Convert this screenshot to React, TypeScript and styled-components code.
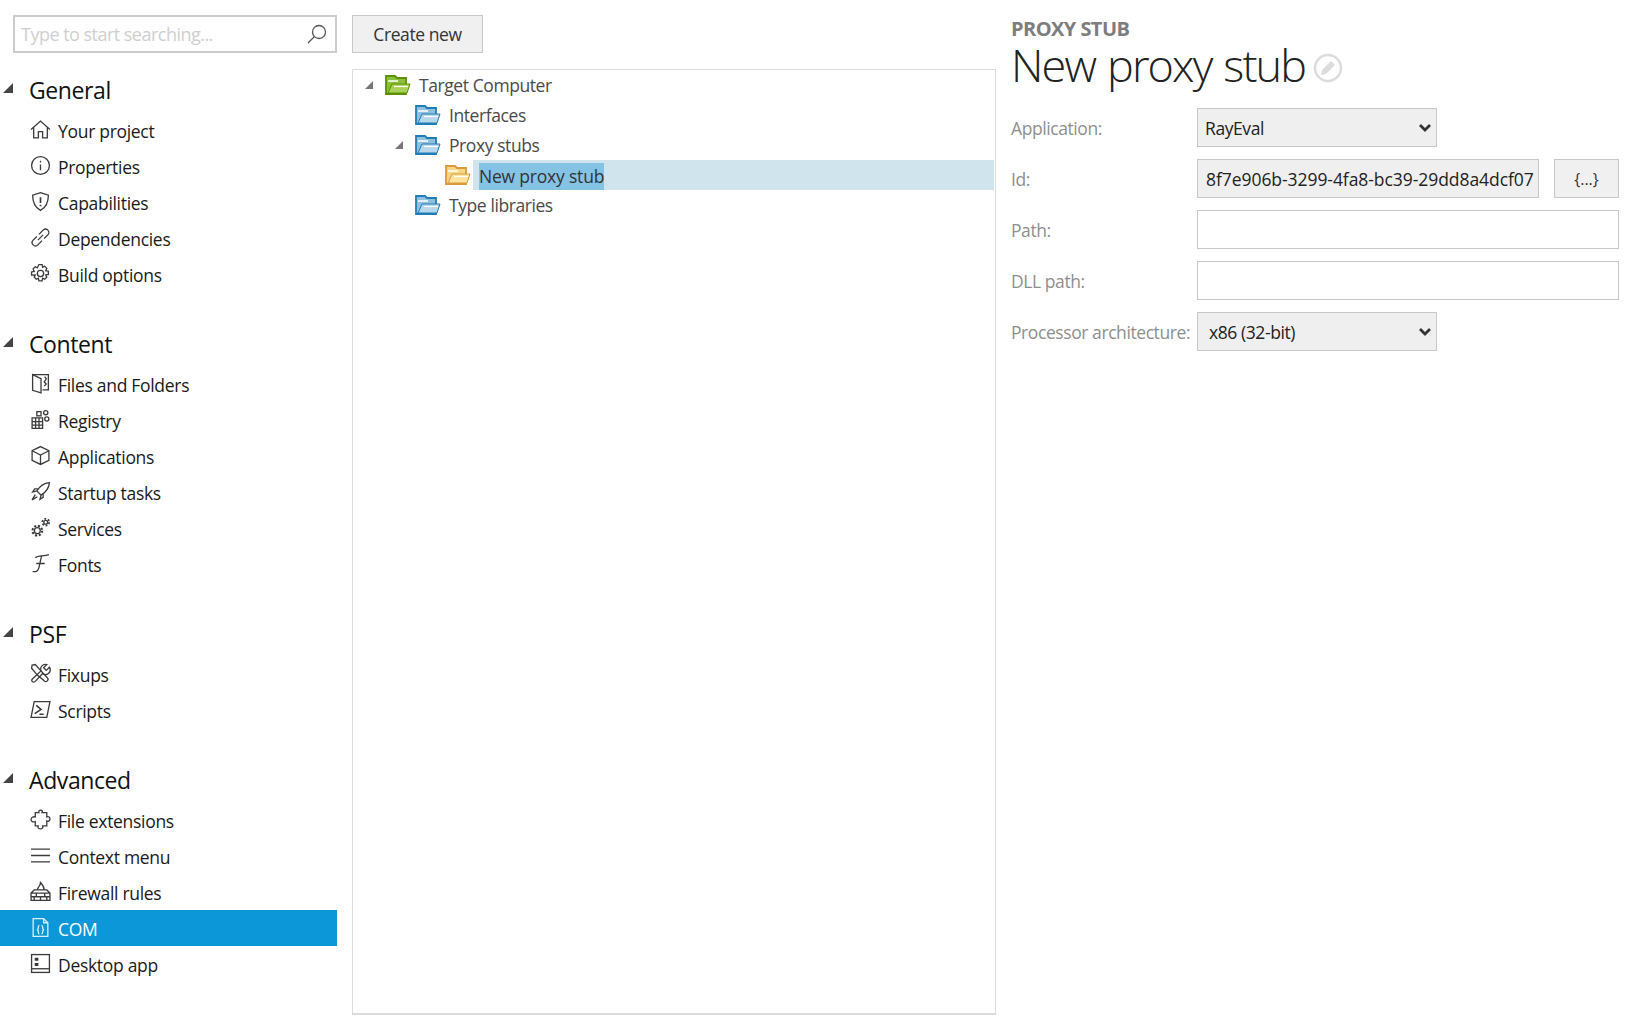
import React from "react";
import styled, { createGlobalStyle } from "styled-components";

const Global = createGlobalStyle`
  html, body { margin: 0; padding: 0; background: #fff; }
  body { font-family: "Open Sans", "Noto Sans", sans-serif; color: #1a1a1a; }
`;

const Page = styled.div`
  width: 1632px;
  height: 1029px;
  display: grid;
  grid-template-columns: 337px 644px 1fr;
  column-gap: 15px;
  padding: 15px 13px 14px 0;
  box-sizing: border-box;
  overflow: hidden;
`;

const Sidebar = styled.aside`
  display: flex;
  flex-direction: column;
`;

const SearchBox = styled.div`
  margin-left: 13px;
  height: 38px;
  box-sizing: border-box;
  border: 2px solid #cccccc;
  display: flex;
  align-items: center;
  padding: 0 8px 0 6px;
  margin-bottom: 17px;
`;

const SearchText = styled.span`
  flex: 1;
  font-size: 18px;
  letter-spacing: -0.52px;
  color: #cfcfcf;
`;

const SectionHead = styled.div<{ $top: number }>`
  display: flex;
  align-items: center;
  height: 40px;
  margin-top: ${(p) => p.$top}px;
  margin-bottom: 2px;
  font-size: 23px;
  letter-spacing: -0.4px;
  color: #111;
`;

const Arrow = styled.svg`
  width: 10px;
  height: 10px;
  margin: -4px 0 0 3px;
`;

const HeadLabel = styled.span`
  margin-left: 16px;
`;

const NavItem = styled.div<{ $active?: boolean }>`
  display: flex;
  align-items: center;
  height: 36px;
  box-sizing: border-box;
  padding: 2px 0 0 30px;
  font-size: 17.5px;
  letter-spacing: -0.3px;
  color: ${(p) => (p.$active ? "#ffffff" : "#1a1a1a")};
  background: ${(p) => (p.$active ? "#0c97d9" : "transparent")};
`;

const NavIcon = styled.svg`
  width: 21px;
  height: 21px;
  margin-right: 7px;
  margin-top: -3px;
  fill: none;
  stroke: currentColor;
  stroke-width: 1.25;
  opacity: 0.85;
  flex: none;
`;

const Middle = styled.section`
  display: flex;
  flex-direction: column;
`;

const CreateButton = styled.button`
  width: 131px;
  height: 38px;
  box-sizing: border-box;
  border: 1px solid #c8c8c8;
  background: #f0f0f0;
  font: inherit;
  font-size: 17.5px;
  letter-spacing: -0.42px;
  color: #333;
  padding: 0;
  margin-bottom: 16px;
`;

const TreePanel = styled.div`
  flex: 1;
  border: 1px solid #dcdcdc;
  border-bottom-width: 2px;
`;

const TreeRow = styled.div<{ $level: number }>`
  display: flex;
  align-items: center;
  height: 30px;
  padding-left: ${(p) => 11 + p.$level * 30}px;
  font-size: 17.5px;
  letter-spacing: -0.42px;
  color: #4a4a4a;
`;

const TreeArrowSlot = styled.span`
  width: 10px;
  margin-right: 11px;
  display: flex;
  justify-content: center;
`;

const TreeArrow = styled.svg`
  width: 10px;
  height: 10px;
`;

const Folder = styled.svg`
  width: 26px;
  height: 22px;
  margin-right: 8px;
  flex: none;
`;

const SelectedBand = styled.div`
  flex: 1;
  height: 30px;
  display: flex;
  align-items: flex-end;
  background: #d0e4ee;
  margin-right: 1px;
  padding-left: 6px;
  margin-left: -6px;
`;

const SelectedText = styled.span`
  background: #84c3e4;
  color: #333;
  line-height: 27px;
  letter-spacing: -0.2px;
`;

const Details = styled.section`
  display: flex;
  flex-direction: column;
`;

const Kicker = styled.div`
  font-size: 20px;
  font-weight: 700;
  letter-spacing: -0.55px;
  line-height: 24px;
  color: #7d7d7d;
  margin-top: 2px;
`;

const TitleRow = styled.div`
  display: flex;
  align-items: center;
  height: 48px;
  margin: 0 0 19px;
`;

const Title = styled.h1`
  margin: 0;
  font-size: 45px;
  font-weight: 300;
  letter-spacing: -1.85px;
  word-spacing: 2px;
  color: #222;
  line-height: 48px;
`;

const EditIcon = styled.svg`
  width: 30px;
  height: 30px;
  margin: 5px 0 0 8px;
`;

const Form = styled.div`
  display: grid;
  grid-template-columns: 186px 240px 1fr;
  grid-auto-rows: 39px;
  row-gap: 12px;
  align-items: center;
  font-size: 17.5px;
  letter-spacing: -0.42px;
`;

const Label = styled.label`
  color: #8e8e8e;
  white-space: nowrap;
`;

const SelectBox = styled.div`
  height: 39px;
  box-sizing: border-box;
  border: 1px solid #c8c8c8;
  background: #efefef;
  color: #222;
  display: flex;
  align-items: center;
  justify-content: space-between;
  padding: 0 4px 0 7px;
  grid-column: 2;
`;

const SelectBoxWide = styled(SelectBox)`
  padding-left: 11px;
`;

const Chevron = styled.svg`
  width: 14px;
  height: 10px;
`;

const IdCell = styled.div`
  grid-column: 2 / 4;
  display: flex;
  gap: 15px;
`;

const IdInput = styled.div`
  flex: 1;
  height: 39px;
  box-sizing: border-box;
  border: 1px solid #c8c8c8;
  background: #efefef;
  color: #222;
  display: flex;
  align-items: center;
  padding-left: 8px;
  letter-spacing: -0.06px;
  white-space: nowrap;
  overflow: hidden;
`;

const GuidButton = styled.button`
  width: 65px;
  height: 39px;
  box-sizing: border-box;
  border: 1px solid #c8c8c8;
  background: #f0f0f0;
  font: inherit;
  font-size: 16px;
  color: #333;
  padding: 0;
`;

const TextInput = styled.div`
  grid-column: 2 / 4;
  height: 39px;
  box-sizing: border-box;
  border: 1px solid #c8c8c8;
  background: #fff;
`;

const icons: Record<string, React.ReactNode> = {
  home: <path d="M1 10 10 2l9 8M3.500 8v10H8v-6h4v6h4.500V8" />,
  info: (<><circle cx="10" cy="10" r="8.500" /><path d="M10 9v5.500M10 5.500v1.600" /></>),
  shield: (<><path d="M10 1.500 17.500 4c0 7-2 11.500-7.500 14.500C4.500 15.500 2.500 11 2.500 4z" /><path d="M10 6v5.500M10 13v1.500" strokeWidth="1.600" /></>),
  link: (<><path d="M8.500 7 12.500 3a3 3 0 0 1 4.500 4.500l-3.500 3.500" /><path d="M11.500 13 7.500 17A3 3 0 0 1 3 12.500L6.500 9" /><path d="M7.500 12.500l5-5" /></>),
  gear: (<><circle cx="10" cy="10" r="3" /><path d="M8.500 1.500h3l.5 2.500 2-.9 2 2-1 2.200 2.500.5v3l-2.500.5 1 2.200-2 2-2-1-.5 2.500h-3l-.5-2.500-2 1-2-2 1-2.200L1.500 11.500v-3L4 8 3 5.600l2-2 2 .9z" /></>),
  files: (<><path d="M2.500 1.500h15v14.500H12" /><path d="M2.500 1.500v15l8 2.500V5.500zM14 3.500l1.500 2-2 3 2 2-2 2" /></>),
  registry: (<><path d="M2 8.500h10v10H2zM2 12h10M2 15.300h10M5.300 8.500v10M8.600 8.500v10" /><rect x="6.500" y="2.500" width="4" height="4" /><circle cx="15" cy="3.500" r="2" /><circle cx="16" cy="9.500" r="2" /></>),
  box: (<><path d="M10 1.500 18 5.500v9L10 18.500 2 14.500v-9zM2 5.500l8 4 8-4M10 9.500v9" /></>),
  rocket: (<><path d="M18.500 1.500c-5 .5-9 3-12 8l4 4c5-3 7.500-7 8-12zM6.500 9.500l-4 1 2-3h3M10.500 13.500l-1 4 3-2v-3M5 13l-3 5 5-3" /></>),
  services: (<><circle cx="7" cy="13" r="2.800" /><circle cx="7" cy="13" r="4.600" strokeWidth="2" strokeDasharray="2 1.610" /><circle cx="15" cy="5" r="1.800" /><circle cx="15" cy="5" r="3.200" strokeWidth="1.800" strokeDasharray="1.700 1.650" /></>),
  font: <path d="M5 4.500C8 2 13 3.500 18 1.500M11 3 8.500 14c-.6 3-3 4.500-6 3.500M6 10h8" />,
  fixups: (<><path d="M2 2l3-.5 5 5.500 6.500 7a2 2 0 0 1-3 3L7 11.500 1.500 5z" /><path d="M18.500 4l-3 3-2.500-2.500 3-3a4.500 4.500 0 0 0-5.500 6L2.500 15c-2 2 .5 4.500 2.500 2.500L12 10a4.500 4.500 0 0 0 6.500-6z" /></>),
  scripts: (<><path d="M4 2.500h15L16 17.500H1z" /><path d="M6 6l4.500 4-6 4M9 14.500h4" strokeWidth="1.500" /></>),
  puzzle: <path d="M6 3.500h2.500c-.5-2 .5-2.500 1.500-2.500s2.500 1 1.500 2.500H16v4c2-.8 3 .5 3 2s-1.500 3-3 2V16h-4c.8 2-.5 3-2 3s-3-1-2.200-3H5v-4C3 12.800 1 12 1 10s2-3 4-2.500V3.500z" />,
  menu: <path d="M1 4h18M1 10h18M1 16h18" />,
  wall: (<><path d="M1 18.500v-7l3-3h12l3 3v7zM1 11.500h18M1 15h18M6 11.500V15M14 11.500V15M10 15v3.500M4 15v3.500M16 15v3.500" /><path d="M7 8.500c0-3 3-3 3-7 2 2 3.500 4 3.500 7" /></>),
  com: (<><path d="M3 1.500h10l4 4v13H3zM13 1.500v4h4" /><path d="M9 8c-1.500 0-1 2-1.200 3S6.500 12 6.500 12s1.100 0 1.300 1 -.3 3 1.200 3M11 8c1.500 0 1 2 1.200 3s1.300 1 1.300 1-1.100 0-1.300 1 .3 3-1.200 3" /></>),
  desktop: (<><rect x="1.500" y="1.500" width="17" height="17" /><path d="M1.500 15h17" /><path d="M4.500 4.500H8v3H4.500zM4.500 9.500H8v3H4.500z" fill="currentColor" stroke="none" /></>),
};

type Item = { label: string; icon: string; active?: boolean };
const sections: { title: string; top: number; items: Item[] }[] = [
  { title: "General", top: 0, items: [
    { label: "Your project", icon: "home" },
    { label: "Properties", icon: "info" },
    { label: "Capabilities", icon: "shield" },
    { label: "Dependencies", icon: "link" },
    { label: "Build options", icon: "gear" },
  ]},
  { title: "Content", top: 32, items: [
    { label: "Files and Folders", icon: "files" },
    { label: "Registry", icon: "registry" },
    { label: "Applications", icon: "box" },
    { label: "Startup tasks", icon: "rocket" },
    { label: "Services", icon: "services" },
    { label: "Fonts", icon: "font" },
  ]},
  { title: "PSF", top: 32, items: [
    { label: "Fixups", icon: "fixups" },
    { label: "Scripts", icon: "scripts" },
  ]},
  { title: "Advanced", top: 32, items: [
    { label: "File extensions", icon: "puzzle" },
    { label: "Context menu", icon: "menu" },
    { label: "Firewall rules", icon: "wall" },
    { label: "COM", icon: "com", active: true },
    { label: "Desktop app", icon: "desktop" },
  ]},
];

const FolderIcon = ({ body, front, edge }: { body: string; front: string; edge: string }) => (
  <Folder viewBox="0 0 26 22">
    <path d="M1 2h9l2 2h9v16H1z" fill={body} stroke={edge} strokeWidth="1.800" />
    <path d="M3 7h10" stroke="#fff" strokeWidth="1.500" />
    <path d="M7 10h18l-3 9H3z" fill={front} stroke={edge} strokeWidth="1" />
    <path d="M9 12.500h14" stroke="#fff" strokeWidth="1.200" />
  </Folder>
);

const Blue = () => <FolderIcon body="#8fc0de" front="#b7d8ec" edge="#1f7db8" />;
const Green = () => <FolderIcon body="#8cbf3a" front="#a9d258" edge="#5c9200" />;
const Yellow = () => <FolderIcon body="#f6d584" front="#fbe49c" edge="#d99a3c" />;

const TArrow = () => (
  <TreeArrow viewBox="0 0 10 10"><path d="M9 1v8H1z" fill="#777" /></TreeArrow>
);

export default function App() {
  return (
    <Page>
      <Global />
      <Sidebar>
        <SearchBox>
          <SearchText>Type to start searching...</SearchText>
          <svg width="20" height="20" viewBox="0 0 20 20" fill="none" stroke="#555" strokeWidth="1.300">
            <circle cx="12" cy="8" r="6.500" />
            <path d="M7.500 12.500 1 19" />
          </svg>
        </SearchBox>
        {sections.map((s) => (
          <div key={s.title}>
            <SectionHead $top={s.top}>
              <Arrow viewBox="0 0 10 10"><path d="M10 0v10H0z" fill="#444" /></Arrow>
              <HeadLabel>{s.title}</HeadLabel>
            </SectionHead>
            {s.items.map((it) => (
              <NavItem key={it.label} $active={it.active}>
                <NavIcon viewBox="0 0 20 20">{icons[it.icon]}</NavIcon>
                {it.label}
              </NavItem>
            ))}
          </div>
        ))}
      </Sidebar>
      <Middle>
        <CreateButton>Create new</CreateButton>
        <TreePanel>
          <TreeRow $level={0}>
            <TreeArrowSlot><TArrow /></TreeArrowSlot>
            <Green />Target Computer
          </TreeRow>
          <TreeRow $level={1}>
            <TreeArrowSlot />
            <Blue />Interfaces
          </TreeRow>
          <TreeRow $level={1}>
            <TreeArrowSlot><TArrow /></TreeArrowSlot>
            <Blue />Proxy stubs
          </TreeRow>
          <TreeRow $level={2}>
            <TreeArrowSlot />
            <Yellow />
            <SelectedBand><SelectedText>New proxy stub</SelectedText></SelectedBand>
          </TreeRow>
          <TreeRow $level={1}>
            <TreeArrowSlot />
            <Blue />Type libraries
          </TreeRow>
        </TreePanel>
      </Middle>
      <Details>
        <Kicker>PROXY STUB</Kicker>
        <TitleRow>
          <Title>New proxy stub</Title>
          <EditIcon viewBox="0 0 30 30">
            <circle cx="15" cy="15" r="13" fill="none" stroke="#dcdcdc" strokeWidth="2.500" />
            <path d="M18 8l4 4-9 9-5 1 1-5z" fill="#dcdcdc" />
          </EditIcon>
        </TitleRow>
        <Form>
          <Label>Application:</Label>
          <SelectBox>RayEval
            <Chevron viewBox="0 0 14 10"><path d="M2 2l5 5 5-5" fill="none" stroke="#333" strokeWidth="2.800" /></Chevron>
          </SelectBox>
          <span />
          <Label>Id:</Label>
          <IdCell>
            <IdInput>8f7e906b-3299-4fa8-bc39-29dd8a4dcf07</IdInput>
            <GuidButton>{"{...}"}</GuidButton>
          </IdCell>
          <Label>Path:</Label>
          <TextInput />
          <Label>DLL path:</Label>
          <TextInput />
          <Label>Processor architecture:</Label>
          <SelectBoxWide>x86 (32-bit)
            <Chevron viewBox="0 0 14 10"><path d="M2 2l5 5 5-5" fill="none" stroke="#333" strokeWidth="2.800" /></Chevron>
          </SelectBoxWide>
        </Form>
      </Details>
    </Page>
  );
}
